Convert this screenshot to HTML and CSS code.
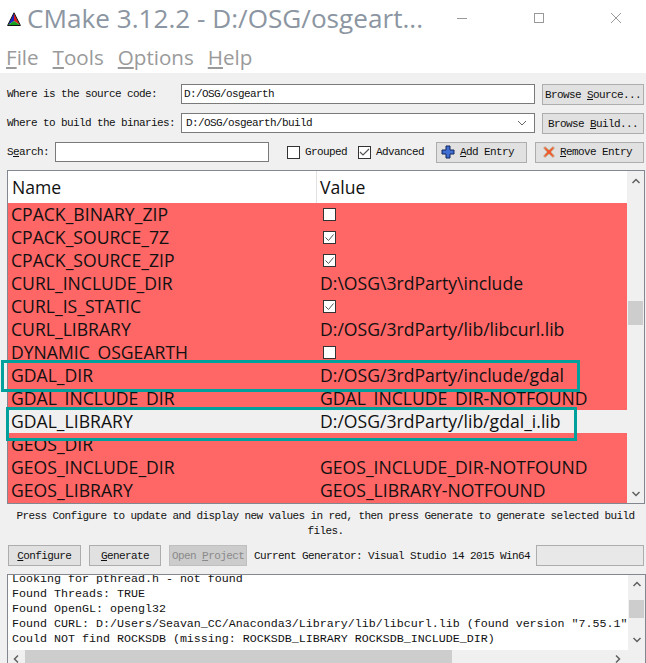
FILE: index.html
```html
<!DOCTYPE html>
<html>
<head>
<meta charset="utf-8">
<title>CMake</title>
<link rel="stylesheet" href="styles.css">
</head>
<body>
<div class="window">
  <header class="titlebar">
    <svg class="logo" width="14" height="14" viewBox="0 0 14 14"><polygon points="7,1 1,13 7,9" fill="#1c22c8"/><polygon points="7,1 13,13 7,9" fill="#d81c1c"/><polygon points="1,13 13,13 7,9" fill="#16a01c"/><path d="M7 .8.6 13.500h12.800z" fill="none" stroke="#111" stroke-width="1"/></svg>
    <span class="title">CMake 3.12.2 - D:/OSG/osgeart...</span>
    <div class="caption">
      <svg width="12" height="12" viewBox="0 0 12 12"><path d="M1 6.500h10" stroke="#999" fill="none"/></svg>
      <svg width="12" height="12" viewBox="0 0 12 12"><rect x="1.500" y="1.500" width="9" height="9" stroke="#999" fill="none"/></svg>
      <svg width="12" height="12" viewBox="0 0 12 12"><path d="M1 1l10 10M11 1 1 11" stroke="#999" fill="none"/></svg>
    </div>
  </header>
  <nav class="menubar">
    <span><u>F</u>ile</span><span><u>T</u>ools</span><span><u>O</u>ptions</span><span><u>H</u>elp</span>
  </nav>
  <main class="content">
    <div class="paths">
      <label class="lbl">Where is the source code:</label>
      <div class="input">D:/OSG/osgearth</div>
      <button class="btn browse">Browse <u>S</u>ource...</button>
      <label class="lbl">Where to build the binaries:</label>
      <div class="input combo">D:/OSG/osgearth/build
        <svg width="10" height="6" viewBox="0 0 10 6"><path d="M1 1l4 4 4-4" stroke="#666" fill="none"/></svg>
      </div>
      <button class="btn browse">Browse <u>B</u>uild...</button>
    </div>
    <div class="searchrow">
      <label class="lbl">S<u>e</u>arch:</label>
      <div class="input search"></div>
      <label class="check lbl"><span class="box"></span>Grouped</label>
      <label class="check lbl adv"><span class="box"><svg width="11" height="11" viewBox="0 0 11 11"><path d="M1 5l3 3 6-6" stroke="#555" stroke-width="1.200" fill="none"/></svg></span>Advanced</label>
      <button class="btn add">
        <svg width="14" height="14" viewBox="0 0 14 14"><path d="M5 1h4v4h4v4H9v4H5V9H1V5h4z" fill="#3f6fd0" stroke="#14245e"/></svg>
        <span><u>A</u>dd Entry</span>
      </button>
      <button class="btn remove">
        <svg width="14" height="14" viewBox="0 0 14 14"><path d="M1.500 3 3 1.500 7 5l4-3.500L12.500 3 9 7l3.500 4L11 12.500 7 9l-4 3.500L1.500 11 5 7z" fill="#ee5a2c" stroke="#c9c0a8"/></svg>
        <span><u>R</u>emove Entry</span>
      </button>
    </div>
    <section class="table">
      <div class="rows">
        <div class="head"><div class="cname">Name</div><div class="cval">Value</div></div>
        <div class="row"><span class="n">CPACK_BINARY_ZIP</span><span class="v"><i class="cb"></i></span></div>
        <div class="row"><span class="n">CPACK_SOURCE_7Z</span><span class="v"><i class="cb"><svg width="11" height="11" viewBox="0 0 11 11"><path d="M1.500 5.500l3 3 5-6" stroke="#555" fill="none"/></svg></i></span></div>
        <div class="row"><span class="n">CPACK_SOURCE_ZIP</span><span class="v"><i class="cb"><svg width="11" height="11" viewBox="0 0 11 11"><path d="M1.500 5.500l3 3 5-6" stroke="#555" fill="none"/></svg></i></span></div>
        <div class="row"><span class="n">CURL_INCLUDE_DIR</span><span class="v">D:\OSG\3rdParty\include</span></div>
        <div class="row"><span class="n">CURL_IS_STATIC</span><span class="v"><i class="cb"><svg width="11" height="11" viewBox="0 0 11 11"><path d="M1.500 5.500l3 3 5-6" stroke="#555" fill="none"/></svg></i></span></div>
        <div class="row"><span class="n">CURL_LIBRARY</span><span class="v">D:/OSG/3rdParty/lib/libcurl.lib</span></div>
        <div class="row"><span class="n">DYNAMIC_OSGEARTH</span><span class="v"><i class="cb"></i></span></div>
        <div class="row"><span class="n">GDAL_DIR</span><span class="v">D:/OSG/3rdParty/include/gdal</span></div>
        <div class="row"><span class="n">GDAL_INCLUDE_DIR</span><span class="v">GDAL_INCLUDE_DIR-NOTFOUND</span></div>
        <div class="row sel"><span class="n">GDAL_LIBRARY</span><span class="v">D:/OSG/3rdParty/lib/gdal_i.lib</span></div>
        <div class="row"><span class="n">GEOS_DIR</span><span class="v"></span></div>
        <div class="row"><span class="n">GEOS_INCLUDE_DIR</span><span class="v">GEOS_INCLUDE_DIR-NOTFOUND</span></div>
        <div class="row"><span class="n">GEOS_LIBRARY</span><span class="v">GEOS_LIBRARY-NOTFOUND</span></div>
      </div>
      <div class="vscroll big">
        <svg width="10" height="6" viewBox="0 0 10 6"><path d="M1.500 5 5 1.500 8.500 5" stroke="#606060" stroke-width="1.500" fill="none"/></svg>
        <div class="track"><div class="thumb"></div></div>
        <svg width="10" height="6" viewBox="0 0 10 6"><path d="M1.500 1 5 4.500 8.500 1" stroke="#606060" stroke-width="1.500" fill="none"/></svg>
      </div>
    </section>
    <p class="hint">Press Configure to update and display new values in red, then press Generate to generate selected build files.</p>
    <div class="actions">
      <button class="btn act"><u>C</u>onfigure</button>
      <button class="btn act"><u>G</u>enerate</button>
      <button class="btn act off">Open <u>P</u>roject</button>
      <span class="lbl gen">Current Generator: Visual Studio 14 2015 Win64</span>
      <div class="btn stop"></div>
    </div>
    <section class="log">
      <div class="logmain">
        <div class="logtext">
          <div class="logline first">Looking for pthread.h - not found</div>
          <div class="logline">Found Threads: TRUE</div>
          <div class="logline">Found OpenGL: opengl32</div>
          <div class="logline">Found CURL: D:/Users/Seavan_CC/Anaconda3/Library/lib/libcurl.lib (found version "7.55.1"</div>
          <div class="logline">Could NOT find ROCKSDB (missing: ROCKSDB_LIBRARY ROCKSDB_INCLUDE_DIR)</div>
        </div>
        <div class="vscroll small">
          <svg width="10" height="6" viewBox="0 0 10 6"><path d="M1.500 5 5 1.500 8.500 5" stroke="#606060" stroke-width="1.500" fill="none"/></svg>
          <div class="track"><div class="thumb"></div></div>
          <svg width="10" height="6" viewBox="0 0 10 6"><path d="M1.500 1 5 4.500 8.500 1" stroke="#606060" stroke-width="1.500" fill="none"/></svg>
        </div>
      </div>
      <div class="hscroll">
        <svg width="6" height="10" viewBox="0 0 6 10"><path d="M5 1.500 1.500 5 5 8.500" stroke="#606060" stroke-width="1.500" fill="none"/></svg>
        <div class="htrack"><div class="hthumb"></div></div>
        <svg width="6" height="10" viewBox="0 0 6 10"><path d="M1 1.500 4.500 5 1 8.500" stroke="#606060" stroke-width="1.500" fill="none"/></svg>
      </div>
    </section>
  </main>
  <div class="mark mark-dir"></div>
  <div class="mark mark-lib"></div>
</div>
</body>
</html>
```
FILE: styles.css
```css
* { box-sizing: border-box; }
html, body { margin: 0; padding: 0; }
body { width: 646px; height: 663px; overflow: hidden; background: #f0f0f0; }
.window { position: relative; width: 646px; height: 663px; overflow: hidden; }
.titlebar { height: 40px; background: #fff; display: flex; align-items: center; padding: 0 0 0 7px; }
.logo { flex: none; margin-top: -2px; }
.title { font: 26.150px "Open Sans", sans-serif; color: #8c96a2; margin-left: 6px; white-space: nowrap; line-height: 36px; margin-top: -5px; }
.caption { display: flex; gap: 65px; margin-left: auto; margin-right: 24px; margin-top: -4px; }
.menubar { height: 33px; background: #fff; display: flex; gap: 14px; padding: 0 0 0 6px; font: 20.600px "Open Sans", sans-serif; color: #9a9a9a; line-height: 35px; }
.content { padding: 11px 2px 0 7px; }
.lbl { font: 11px/12px "Liberation Mono", monospace; letter-spacing: -0.6px; color: #111; white-space: nowrap; }
.paths { display: grid; grid-template-columns: 174px 354px 109px; grid-auto-rows: 21px; row-gap: 8px; align-items: start; padding-bottom: 8px; }
.paths .lbl { line-height: 21px; }
.input { height: 20px; border: 1px solid #7a7a7a; background: #fff; font: 11px/18px "Liberation Mono", monospace; letter-spacing: -0.6px; color: #111; padding-left: 2px; white-space: nowrap; }
.combo { display: flex; align-items: center; justify-content: space-between; padding: 0 7px 0 4px; }
.btn { height: 21px; border: 1px solid #adadad; background: #e1e1e1; font: 11px/12px "Liberation Mono", monospace; letter-spacing: -0.6px; color: #111; padding: 0; white-space: nowrap; }
.browse { width: 102px; margin-left: 7px; }
.searchrow { display: flex; align-items: center; height: 20px; }
.search { width: 214px; margin-left: 6px; }
.check { display: flex; align-items: center; gap: 5px; }
.check .box { width: 13px; height: 13px; border: 1px solid #333; background: #fff; display: flex; align-items: center; justify-content: center; }
.searchrow .check { margin-left: 18px; }
.searchrow .adv { margin-left: 11px; }
.add { width: 91px; margin-left: 12px; display: flex; align-items: center; gap: 5px; padding-left: 4px; }
.remove { width: 109px; margin-left: 8px; display: flex; align-items: center; gap: 4px; padding-left: 6px; }
.table { display: flex; margin-top: 8px; height: 334px; border: 1px solid #828790; background: #f0f0f0; width: 638px; }
.rows { width: 619px; background: #ff6666; }
.head { height: 32px; background: #fff; display: flex; font: 17.600px/32px "Open Sans", sans-serif; color: #111; }
.cname { width: 309px; padding-left: 4px; border-right: 1px solid #e2e2e2; }
.cval { padding-left: 3px; }
.row { height: 23px; display: flex; font: 17.600px/23px "Open Sans", sans-serif; color: #111; white-space: nowrap; }
.row.sel { background: #f0f0f0; }
.n { width: 309px; padding-left: 3px; flex: none; }
.v { padding-left: 3px; display: flex; align-items: center; }
.cb { width: 13px; height: 13px; margin-left: 3px; border: 1px solid #333; background: #fff; display: flex; align-items: center; justify-content: center; }
.vscroll { background: #f0f0f0; display: flex; flex-direction: column; align-items: center; justify-content: space-between; }
.big { width: 17px; flex: none; height: 100%; padding: 7px 0 6px; }
.small { width: 17px; flex: none; height: 75px; padding: 6px 0 7px; }
.track { flex: 1; width: 100%; display: flex; flex-direction: column; }
.big .track { padding-top: 117px; }
.big .thumb { height: 24px; width: 15px; margin-left: 1px; background: #cdcdcd; }
.small .track { padding-top: 13px; }
.small .thumb { height: 18px; width: 15px; margin-left: 1px; background: #cdcdcd; }
.hint { width: 625px; margin: 5px 0 0 6px; font: 11px/14.500px "Liberation Mono", monospace; letter-spacing: -0.6px; color: #111; text-align: center; }
.actions { display: flex; align-items: center; height: 21px; margin-top: 7px; padding-left: 1px; }
.act { width: 73px; margin-right: 8px; }
.off { width: 78px; background: #cccccc; color: #8a8a8a; border-color: #bfbfbf; margin-right: 7px; }
.gen { margin-right: 6px; }
.stop { width: 108px; background: #e8e8e8; flex: none; }
.log { margin-top: 8px; width: 639px; height: 90px; border: 1px solid #828790; border-bottom: 0; background: #fff; overflow: hidden; }
.logmain { display: flex; height: 75px; }
.logtext { flex: 1; min-width: 0; overflow: hidden; padding: 0 0 0 4px; font: 11.670px/15px "Liberation Mono", monospace; color: #111; }
.logline { white-space: nowrap; height: 15px; }
.first { margin-top: -3px; }
.hscroll { height: 17px; background: #f0f0f0; display: flex; align-items: center; padding: 0 24px 0 5px; }
.htrack { flex: 1; height: 100%; padding: 0 0 0 6px; display: flex; }
.hthumb { width: 427px; height: 17px; background: #cdcdcd; }
.mark { position: absolute; border: 3px solid #00a09c; pointer-events: none; }
.mark-dir { left: 1px; top: 360px; width: 579px; height: 32px; }
.mark-lib { left: 6px; top: 407px; width: 571px; height: 34px; }
```
